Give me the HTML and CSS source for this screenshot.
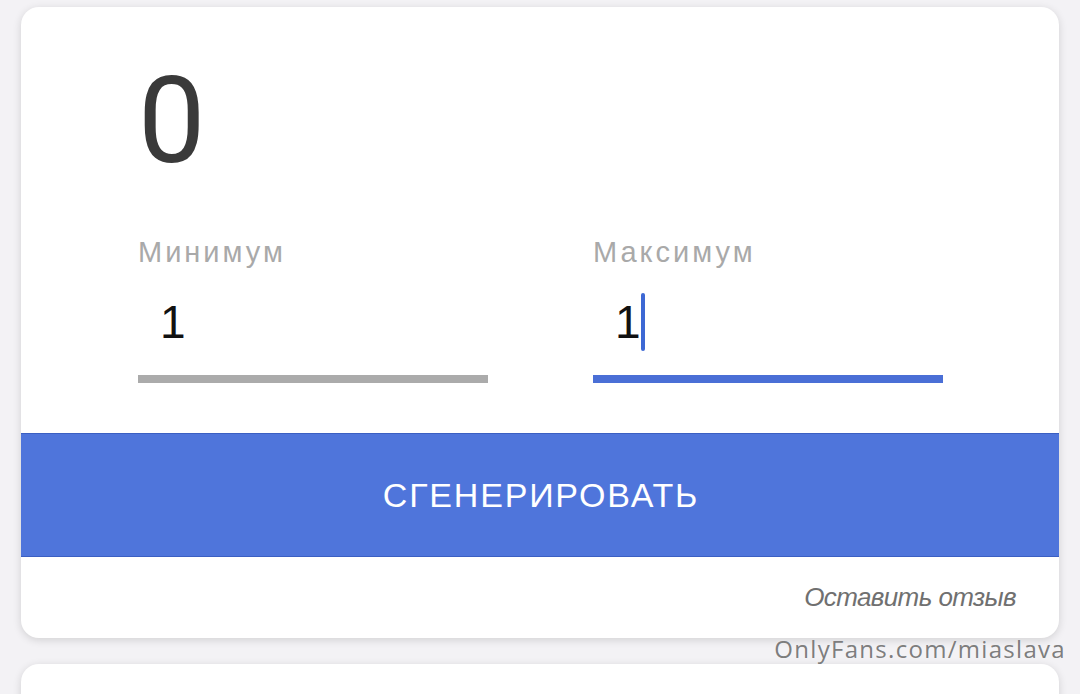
FILE: index.html
```html
<!DOCTYPE html>
<html lang="ru">
<head>
<meta charset="utf-8">
<title>Генератор случайных чисел</title>
<link rel="stylesheet" href="styles.css">
</head>
<body>
<main class="page">
  <section class="card">
    <div class="card-body">
      <div class="result">0</div>
      <div class="fields">
        <div class="field">
          <div class="field-label">Минимум</div>
          <div class="field-value">1</div>
          <div class="field-line"></div>
        </div>
        <div class="field field-active">
          <div class="field-label">Максимум</div>
          <div class="field-value">1<span class="caret"></span></div>
          <div class="field-line"></div>
        </div>
      </div>
    </div>
    <button class="generate" type="button">СГЕНЕРИРОВАТЬ</button>
    <div class="card-footer"><a class="feedback" href="#">Оставить отзыв</a></div>
  </section>
  <section class="card card-next"></section>
  <div class="watermark">OnlyFans.com/miaslava</div>
</main>
</body>
</html>
```
FILE: styles.css
```css
* { box-sizing: border-box; }
html, body { margin: 0; padding: 0; }
body {
  background: #f3f2f5;
  width: 1080px;
  height: 694px;
  overflow: hidden;
  font-family: "Liberation Sans", Arial, sans-serif;
}
.page {
  position: relative;
  padding: 7px 21px 0 21px;
  display: flex;
  flex-direction: column;
  gap: 26px;
  height: 694px;
}
.card {
  background: #ffffff;
  border-radius: 18px;
  box-shadow: 0 2px 8px rgba(0, 0, 0, 0.14);
  overflow: hidden;
  display: flex;
  flex-direction: column;
  flex: none;
  height: 631px;
}
.card-next { height: 60px; }
.card-body {
  padding: 54px 0 50px 117px;
}
.result {
  font-family: Roboto, sans-serif;
  font-size: 120px;
  line-height: 120px;
  color: #3a3a3a;
}
.fields {
  margin-top: 55px;
  display: grid;
  grid-template-columns: 455px 455px;
}
.field { width: 350px; }
.field-label {
  font-size: 29px;
  line-height: 32px;
  letter-spacing: 3px;
  color: #a9a9a9;
}
.field-value {
  margin-top: 25px;
  padding-left: 22px;
  font-size: 46px;
  line-height: 58px;
  height: 58px;
  color: #111111;
  display: flex;
  align-items: flex-start;
}
.caret {
  display: inline-block;
  width: 4px;
  height: 58px;
  border-radius: 2px;
  background: #3d68d4;
}
.field-line {
  margin-top: 24px;
  height: 8px;
  background: #ababab;
}
.field-active .field-line { background: #4a6fd6; }
.generate {
  display: block;
  width: 100%;
  height: 124px;
  border: none;
  border-top: 1px solid #3b5fc2;
  border-bottom: 1px solid #3b5fc2;
  background: #4f75db;
  color: #ffffff;
  font-family: "Liberation Sans", Arial, sans-serif;
  font-size: 34px;
  letter-spacing: 1.8px;
  padding: 0 0 0 2px;
  text-align: center;
}
.card-footer {
  flex: 1;
  padding: 24px 43px 0 0;
  text-align: right;
}
.feedback {
  font-size: 26px;
  line-height: 32px;
  letter-spacing: -0.6px;
  font-style: italic;
  color: #707070;
  text-decoration: none;
}
.watermark {
  position: absolute;
  right: 14px;
  top: 633px;
  font-family: "Open Sans", sans-serif;
  font-size: 24px;
  line-height: 32px;
  letter-spacing: 1.3px;
  color: rgba(110, 110, 110, 0.9);
}
```
